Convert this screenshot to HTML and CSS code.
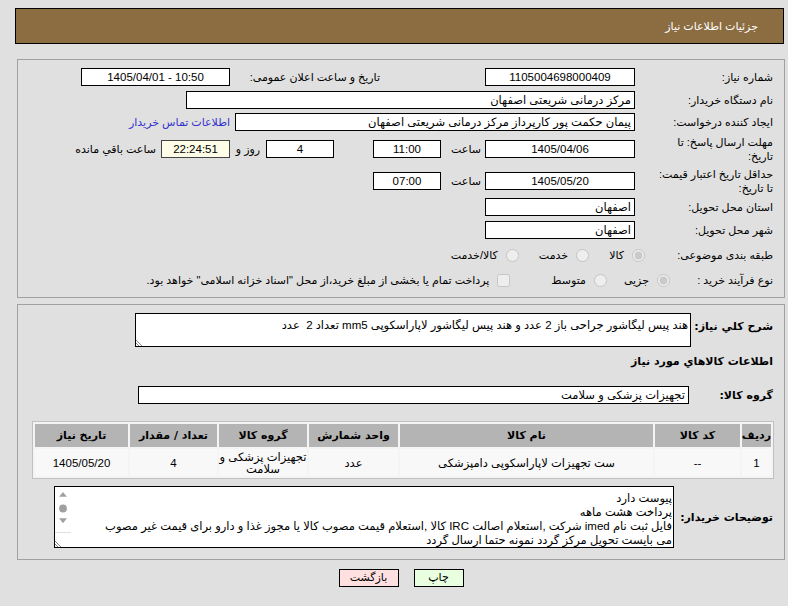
FILE: index.html
```html
<!DOCTYPE html>
<html lang="fa" dir="rtl">
<head>
<meta charset="utf-8">
<title>جزئیات اطلاعات نیاز</title>
<link rel="stylesheet" href="styles.css">
</head>
<body>
<div class="page">
  <div class="header">جزئیات اطلاعات نیاز</div>

  <div class="panel p1">
    <div class="row r1">
      <div class="lbl">شماره نیاز:</div>
      <div class="box w150 c">1105004698000409</div>
      <div class="sp105"></div>
      <div class="lbl2">تاریخ و ساعت اعلان عمومی:</div>
      <div class="box w149 c ltr">1405/04/01 - 10:50</div>
    </div>
    <div class="row r2">
      <div class="lbl">نام دستگاه خریدار:</div>
      <div class="box w449">مرکز درمانی شریعتی اصفهان</div>
    </div>
    <div class="row r3">
      <div class="lbl">ایجاد کننده درخواست:</div>
      <div class="box w400">پیمان حکمت پور کارپرداز مرکز درمانی شریعتی اصفهان</div>
      <a class="link" href="#">اطلاعات تماس خریدار</a>
    </div>
    <div class="row r4">
      <div class="lbl two">مهلت ارسال پاسخ: تا<br>تاریخ:</div>
      <div class="box w150 c">1405/04/06</div>
      <div class="unit">ساعت</div>
      <div class="box w68 c">11:00</div>
      <div class="sp39"></div>
      <div class="box w68 c">4</div>
      <div class="unit2">روز و</div>
      <div class="box w69 c cd">22:24:51</div>
      <div class="rem">ساعت باقي مانده</div>
    </div>
    <div class="row r5">
      <div class="lbl two">حداقل تاریخ اعتبار قیمت:<br>تا تاریخ:</div>
      <div class="box w150 c">1405/05/20</div>
      <div class="unit">ساعت</div>
      <div class="box w68 c">07:00</div>
    </div>
    <div class="row r6">
      <div class="lbl">استان محل تحویل:</div>
      <div class="box w150">اصفهان</div>
    </div>
    <div class="row r7">
      <div class="lbl">شهر محل تحویل:</div>
      <div class="box w150">اصفهان</div>
    </div>
    <div class="row r8">
      <div class="lbl">طبقه بندی موضوعی:</div>
      <input class="rad first" type="radio" name="cat" checked disabled>
      <span class="opt o1">کالا</span>
      <input class="rad" type="radio" name="cat" disabled>
      <span class="opt o2">خدمت</span>
      <input class="rad" type="radio" name="cat" disabled>
      <span class="opt">کالا/خدمت</span>
    </div>
    <div class="row r9">
      <div class="lbl3">نوع فرآیند خرید :</div>
      <input class="rad" type="radio" name="proc" checked disabled>
      <span class="opt o3">جزیی</span>
      <input class="rad" type="radio" name="proc" disabled>
      <span class="opt o4">متوسط</span>
      <input class="chk" type="checkbox" disabled>
      <span class="opt">پرداخت تمام یا بخشی از مبلغ خرید،از محل "اسناد خزانه اسلامی" خواهد بود.</span>
    </div>
  </div>

  <div class="panel p2">
    <div class="row ra">
      <div class="blbl la">شرح کلي نیاز:</div>
      <div class="tarea">
        <div class="tatext">هند پیس لیگاشور جراحی باز 2 عدد و هند پیس لیگاشور لاپاراسکوپی mm5 تعداد 2&nbsp; عدد</div>
        <div class="grip-row"><svg class="grip" width="8" height="8" viewBox="0 0 8 8"><path d="M0 2 L6 8 M0 5 L3 8" stroke="#888" stroke-width="1"/></svg></div>
      </div>
    </div>
    <div class="row rb">
      <div class="blbl">اطلاعات کالاهاي مورد نیاز</div>
    </div>
    <div class="row rc">
      <div class="blbl lc">گروه کالا:</div>
      <div class="box w551">تجهیزات پزشکی و سلامت</div>
    </div>

    <table class="items">
      <colgroup>
        <col class="c1"><col class="c2"><col class="c3"><col class="c4"><col class="c5"><col class="c6"><col class="c7">
      </colgroup>
      <thead>
        <tr>
          <th>ردیف</th>
          <th>کد کالا</th>
          <th>نام کالا</th>
          <th>واحد شمارش</th>
          <th>گروه کالا</th>
          <th>تعداد / مقدار</th>
          <th>تاریخ نیاز</th>
        </tr>
      </thead>
      <tbody>
        <tr>
          <td>1</td>
          <td>--</td>
          <td>ست تجهیزات لاپاراسکوپی دامپزشکی</td>
          <td>عدد</td>
          <td>تجهیزات پزشکی و سلامت</td>
          <td>4</td>
          <td>1405/05/20</td>
        </tr>
      </tbody>
    </table>

    <div class="row rd">
      <div class="blbl ld">توضیحات خریدار:</div>
      <div class="notes">
        <div class="ntext">پیوست دارد<br>پرداخت هشت ماهه<br>فایل ثبت نام imed شرکت ,استعلام اصالت IRC کالا ,استعلام قیمت مصوب کالا یا مجوز غذا و دارو برای قیمت غیر مصوب<br>می بایست تحویل مرکز گردد نمونه حتما ارسال گردد</div>
        <div class="sbar">
          <svg class="sb-icons" width="16" height="46" viewBox="0 0 16 46">
            <path d="M4 10 L8 5 L12 10 Z" fill="#a0a0a0"/>
            <circle cx="8" cy="22" r="4" fill="#a0a0a0"/>
            <path d="M4 32 L12 32 L8 37 Z" fill="#a0a0a0"/>
          </svg>
          <div class="sb-grip"><svg width="8" height="8" viewBox="0 0 8 8"><path d="M0 2 L6 8 M0 5 L3 8" stroke="#888" stroke-width="1"/></svg></div>
        </div>
      </div>
    </div>
  </div>

  <div class="buttons">
    <button class="btn print" type="button">چاپ</button>
    <button class="btn back" type="button">بازگشت</button>
  </div>
</div>
</body>
</html>
```

FILE: styles.css
```css
* { box-sizing: border-box; }

body {
  margin: 0;
  background: #e0e0e0;
  font-family: "Liberation Sans", "DejaVu Sans", sans-serif;
  font-size: 11px;
  color: #000;
}

.page { width: 788px; }

.header {
  margin: 8px 4px 0 0;
  width: 769px;
  height: 36px;
  border: 1px solid #000;
  background: #8c6d42;
  color: #fff;
  font-size: 11px;
  display: flex;
  align-items: center;
  padding-right: 25px;
}

.panel {
  margin: 15px 3px 0 0;
  width: 768px;
  border: 1px solid #a0a0a0;
  padding: 6px 11px 5px 0;
}

.p2 {
  margin-top: 6px;
  padding: 8px 11px 11px 0;
}

.row { display: flex; align-items: center; }
.r1 { height: 22px; }
.r2 { height: 24px; }
.r3 { height: 20px; }
.r4 { height: 34px; }
.r5 { height: 30px; }
.r6 { height: 22px; }
.r7 { height: 24px; }
.r8 { height: 26px; }
.r9 { height: 24px; }

.lbl { width: 138px; flex: none; white-space: nowrap; }
.lbl.two { line-height: 14px; white-space: normal; }
.lbl2 { width: 150px; flex: none; white-space: nowrap; }
.lbl3 { width: 103px; flex: none; white-space: nowrap; }

.box {
  height: 18px;
  border: 1px solid #000;
  background: #fff;
  display: flex;
  align-items: center;
  padding: 0 3px;
  flex: none;
  white-space: nowrap;
  overflow: hidden;
  font-size: 11.5px;
}
.box.c { justify-content: center; }
.box.ltr { direction: ltr; }
.box.cd { background: #fdfde8; border-color: #444; }

.w150 { width: 150px; }
.w149 { width: 149px; }
.w449 { width: 449px; }
.w400 { width: 400px; }
.w68 { width: 68px; }
.w69 { width: 69px; }
.w551 { width: 551px; }

.sp105 { width: 105px; flex: none; }
.sp39 { width: 39px; flex: none; }

.unit { width: 44px; flex: none; padding-right: 4px; }
.unit2 { width: 36px; flex: none; text-align: center; }
.rem { margin-right: 5px; white-space: nowrap; }

.link { margin-right: 5px; color: #3333cc; text-decoration: none; white-space: nowrap; }

.rad, .chk { margin: 0; width: 13px; height: 13px; flex: none; }
.rad.first { margin-right: -10px; }
.opt { margin-right: 8px; white-space: nowrap; }
.o1 { margin-left: 20px; }
.o2 { margin-left: 20px; }
.o3 { margin-left: 17px; }
.o4 { margin-left: 41px; }

.blbl { font-family: "DejaVu Sans", sans-serif; font-weight: bold; font-size: 11px; white-space: nowrap; flex: none; }
.la { width: 82px; }
.lc { width: 84px; }
.ld { width: 99px; }

.ra { align-items: flex-start; height: 34px; }
.ra .la { padding-top: 7px; }
.tarea {
  width: 556px;
  height: 34px;
  border: 1px solid #000;
  background: #fff;
  display: flex;
  flex-direction: column;
  justify-content: space-between;
}
.tatext { padding: 4px 2px 0 2px; white-space: nowrap; overflow: hidden; font-size: 11.5px; }
.grip-row { display: flex; justify-content: flex-end; height: 8px; }
.grip { display: block; }

.rb { height: 28px; }
.rc { margin-top: 11px; height: 18px; }

.items {
  margin: 17px -1px 0 0;
  width: 742px;
  border: 1px solid #c0c0c0;
  border-spacing: 2px;
  background: #f4f4f4;
  table-layout: fixed;
}
.items .c1 { width: 29px; }
.items .c2 { width: 85px; }
.items .c3 { width: 253px; }
.items .c4 { width: 89px; }
.items .c5 { width: 88px; }
.items .c6 { width: 87px; }
.items .c7 { width: 93px; }

.items th {
  background: #b4b4b4;
  height: 23px;
  font-family: "DejaVu Sans", sans-serif;
  font-weight: bold;
  font-size: 11px;
  padding: 0;
  text-align: center;
}
.items th:first-child { text-align: right; }
.items td {
  background: #f8f8f8;
  height: 27px;
  text-align: center;
  padding: 0;
  line-height: 12px;
  font-size: 11.5px;
}

.rd { margin-top: 7px; height: 62px; }
.notes {
  width: 620px;
  height: 62px;
  border: 1px solid #000;
  background: #fff;
  display: flex;
}
.ntext {
  flex: 1;
  padding: 4px 1px 0 2px;
  line-height: 14px;
  white-space: nowrap;
  overflow: hidden;
  font-size: 11.5px;
}
.sbar {
  width: 16px;
  flex: none;
  display: flex;
  flex-direction: column;
  justify-content: space-between;
}
.sb-icons { display: block; border-bottom: 1px solid #e0e0e0; }
.sb-grip { height: 14px; display: flex; align-items: flex-end; justify-content: flex-end; }
.sb-grip svg { display: block; }

.buttons {
  width: 768px;
  margin: 9px 3px 0 0;
  display: flex;
  justify-content: center;
  gap: 15px;
}
.btn {
  height: 18px;
  border: 1px solid #000;
  font-family: "DejaVu Sans", sans-serif;
  font-size: 11px;
  padding: 0;
  line-height: 14px;
  color: #000;
}
.print { width: 50px; background: #e8ffe0; }
.back { width: 60px; background: #ffe0e0; }
```
